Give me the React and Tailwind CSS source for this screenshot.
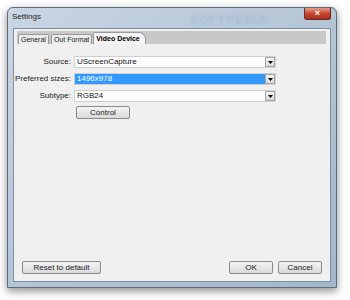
import React from "react";

const font = { fontFamily: '"Liberation Sans", Arial, sans-serif' };

const Arrow = () => (
  <div className="w-[10px] h-[10px] border border-[#a5a5a5] bg-gradient-to-b from-[#f5f5f5] to-[#d8d8d8] flex items-center justify-center">
    <svg width="5" height="3" viewBox="0 0 5 3">
      <path d="M0 0h5L2.5 3z" fill="#000" />
    </svg>
  </div>
);

const Field = ({ label, value, selected }) => (
  <div className="flex items-center h-[12px]">
    <div className="w-[60px] pr-[3px] text-right text-[8px] text-[#222] leading-none whitespace-nowrap">{label}</div>
    <div className="w-[202px] h-[12px] border border-[#cfcfcf] bg-white flex items-center">
      <div
        className={
          selected
            ? "flex-1 h-full bg-[#3399ff] text-white text-[8px] leading-[10px] pl-[2px]"
            : "flex-1 h-full text-[#111] text-[8px] leading-[10px] pl-[2px]"
        }
      >
        {value}
      </div>
      <Arrow />
    </div>
  </div>
);

const Btn = ({ children, w }) => (
  <button
    className={`${w} h-[13px] border border-[#8a8a8a] rounded-[2px] bg-gradient-to-b from-[#f4f4f4] to-[#dadada] text-[8px] leading-none text-[#222] whitespace-nowrap`}
  >
    {children}
  </button>
);

export default function App() {
  return (
    <div className="w-[350px] h-[300px] bg-white pt-[7px] pl-[7px] overflow-hidden" style={font}>
      {/* window frame */}
      <div className="w-[330px] h-[281px] rounded-t-[6px] border border-[#5d6b7a] bg-gradient-to-br from-[#c9d6e3] via-[#b4c5d6] to-[#a3b7cb] shadow-[0_3px_8px_rgba(0,0,0,0.45)] flex flex-col">
        {/* title bar */}
        <div className="h-[20px] flex items-start relative">
          <span className="text-[8px] text-[#1a1a1a] ml-[4px] mt-[5px] leading-none">Settings</span>
          <span className="absolute left-[182px] top-[3px] text-[12px] font-bold tracking-[1px] text-[#a9bccf] blur-[0.8px]">
            SOFTPEDIA
          </span>
          <div className="ml-auto mr-[5px] w-[27px] h-[12px] rounded-b-[3px] border border-[#6b2a22] border-t-0 bg-gradient-to-b from-[#e59a8a] via-[#c9452f] to-[#a8301f] flex items-center justify-center">
            <span className="text-white text-[9px] font-bold leading-none">×</span>
          </div>
        </div>
        {/* client area */}
        <div className="mx-[5px] mb-[5px] flex-1 border border-[#7d8fa3] bg-[#f0f0f0] flex flex-col">
          <div className="mt-[2px] ml-[3px] w-[309px] h-[13px] bg-[#c8c8c8] flex items-end pl-[1px]">
            <div className="h-[10px] px-[2px] border border-b-0 border-[#9a9a9a] bg-[#ececec] text-[7px] leading-[9px] text-[#222] rounded-t-[2px]">
              General
            </div>
            <div className="h-[10px] ml-[2px] px-[2px] border border-b-0 border-[#9a9a9a] bg-[#ececec] text-[7px] leading-[9px] text-[#222] rounded-t-[2px]">
              Out Format
            </div>
            <div className="h-[12px] ml-[1px] pl-[2px] pr-[5px] border border-b-0 border-[#9a9a9a] bg-[#f4f4f4] text-[7px] leading-[11px] font-bold text-[#000] rounded-tl-[2px] rounded-tr-[7px]">
              Video Device
            </div>
          </div>
          <div className="mt-[12px] flex flex-col gap-[5px]">
            <Field label="Source:" value="UScreenCapture" />
            <Field label="Preferred sizes:" value="1496x978" selected />
            <Field label="Subtype:" value="RGB24" />
            <div className="flex ml-[62px] mt-[-1px]">
              <Btn w="w-[54px]">Control</Btn>
            </div>
          </div>
          <div className="mt-auto mb-[7px] flex items-center px-[8px]">
            <Btn w="w-[79px]">Reset to default</Btn>
            <div className="ml-auto flex gap-[5px]">
              <Btn w="w-[44px]">OK</Btn>
              <Btn w="w-[44px]">Cancel</Btn>
            </div>
          </div>
        </div>
      </div>
    </div>
  );
}
